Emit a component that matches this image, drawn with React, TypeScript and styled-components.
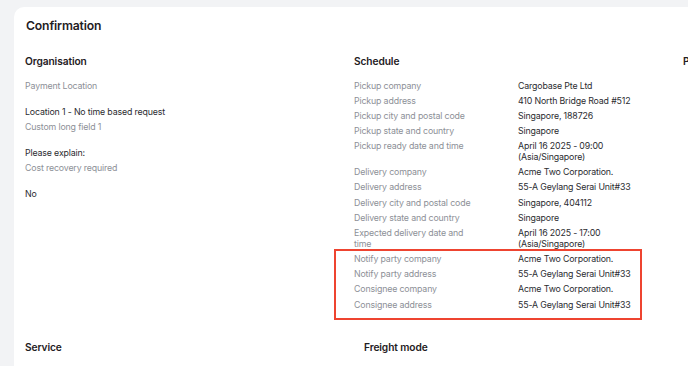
import React from 'react';
import styled, { createGlobalStyle } from 'styled-components';

const GlobalStyle = createGlobalStyle`
  html, body {
    margin: 0;
    padding: 0;
    background: #f2f3f5;
    overflow: hidden;
    font-family: Inter, "Noto Sans", sans-serif;
    -webkit-font-smoothing: antialiased;
  }
`;

type Row = { label: string; value: string };

const scheduleRows: Row[] = [
  { label: 'Pickup company', value: 'Cargobase Pte Ltd' },
  { label: 'Pickup address', value: '410 North Bridge Road #512' },
  { label: 'Pickup city and postal code', value: 'Singapore, 188726' },
  { label: 'Pickup state and country', value: 'Singapore' },
  { label: 'Pickup ready date and time', value: 'April 16 2025 - 09:00 (Asia/Singapore)' },
  { label: 'Delivery company', value: 'Acme Two Corporation.' },
  { label: 'Delivery address', value: '55-A Geylang Serai Unit#33' },
  { label: 'Delivery city and postal code', value: 'Singapore, 404112' },
  { label: 'Delivery state and country', value: 'Singapore' },
  { label: 'Expected delivery date and time', value: 'April 16 2025 - 17:00 (Asia/Singapore)' },
];

const partyRows: Row[] = [
  { label: 'Notify party company', value: 'Acme Two Corporation.' },
  { label: 'Notify party address', value: '55-A Geylang Serai Unit#33' },
  { label: 'Consignee company', value: 'Acme Two Corporation.' },
  { label: 'Consignee address', value: '55-A Geylang Serai Unit#33' },
];

const orgFields: Row[] = [
  { label: 'Payment Location', value: 'Location 1 - No time based request' },
  { label: 'Custom long field 1', value: 'Please explain:' },
  { label: 'Cost recovery required', value: 'No' },
];

const App = () => {
  return (
    <>
      <GlobalStyle />
      <Page>
        <Card>
          <Title>Confirmation</Title>
          <Sections>
            <Section>
              <Heading>Organisation</Heading>
              <FieldList>
                {orgFields.map((f) => (
                  <Field key={f.label}>
                    <Label>{f.label}</Label>
                    <Value>{f.value}</Value>
                  </Field>
                ))}
              </FieldList>
            </Section>
            <Section>
              <Heading>Schedule</Heading>
              <RowList>
                {scheduleRows.map((r) => (
                  <DetailRow key={r.label}>
                    <RowLabel>{r.label}</RowLabel>
                    <RowValue>{r.value}</RowValue>
                  </DetailRow>
                ))}
                <Highlight>
                  {partyRows.map((r) => (
                    <DetailRow key={r.label}>
                      <RowLabel>{r.label}</RowLabel>
                      <RowValue>{r.value}</RowValue>
                    </DetailRow>
                  ))}
                </Highlight>
              </RowList>
            </Section>
            <Section>
              <Heading>Pricing</Heading>
            </Section>
          </Sections>
          <LowerSections>
            <Section>
              <Heading>Service</Heading>
            </Section>
            <Section>
              <Heading>Freight mode</Heading>
            </Section>
          </LowerSections>
        </Card>
      </Page>
    </>
  );
};

const Page = styled.div`
  padding: 7px 0 0 14px;
`;

const Card = styled.div`
  width: 1100px;
  min-height: 400px;
  background: #ffffff;
  border-radius: 10px;
  padding: 12px 0 0 11px;
  box-sizing: border-box;
`;

const Title = styled.h1`
  margin: 0;
  padding-left: 1px;
  font-size: 12.2px;
  letter-spacing: -0.15px;
  line-height: 14px;
  font-weight: 600;
  color: #1f2023;
`;

const Sections = styled.div`
  display: grid;
  grid-template-columns: 329px 329px 329px;
  margin-top: 21px;
`;

const LowerSections = styled.div`
  display: grid;
  grid-template-columns: 339px 339px;
  margin-top: 30px;
`;

const Section = styled.div`
  display: flex;
  flex-direction: column;
`;

const Heading = styled.h2`
  margin: 0 0 12.5px;
  font-size: 10.2px;
  letter-spacing: -0.1px;
  line-height: 14px;
  font-weight: 600;
  color: #1f2023;
`;

const FieldList = styled.div`
  display: flex;
  flex-direction: column;
  gap: 4.5px;
`;

const Field = styled.div`
  display: flex;
  flex-direction: column;
  gap: 15.3px;
`;

const Label = styled.div`
  font-size: 8.8px;
  letter-spacing: -0.15px;
  line-height: 10.7px;
  color: #8d9097;
`;

const Value = styled.div`
  font-size: 8.8px;
  letter-spacing: -0.15px;
  line-height: 10.7px;
  color: #2b2c30;
`;

const RowList = styled.div`
  display: flex;
  flex-direction: column;
  gap: 4.5px;
`;

const DetailRow = styled.div`
  display: grid;
  grid-template-columns: 120px 130px;
  column-gap: 44px;
  font-size: 8.8px;
  letter-spacing: -0.15px;
  line-height: 10.7px;
`;

const RowLabel = styled.div`
  color: #8d9097;
`;

const RowValue = styled.div`
  color: #2b2c30;
`;

const Highlight = styled.div`
  position: relative;
  display: flex;
  flex-direction: column;
  gap: 4.5px;

  &::after {
    content: '';
    position: absolute;
    top: -5px;
    left: -20px;
    width: 308px;
    bottom: -9.5px;
    border: 2px solid #ee4430;
    box-sizing: border-box;
    pointer-events: none;
  }
`;

export default App;
